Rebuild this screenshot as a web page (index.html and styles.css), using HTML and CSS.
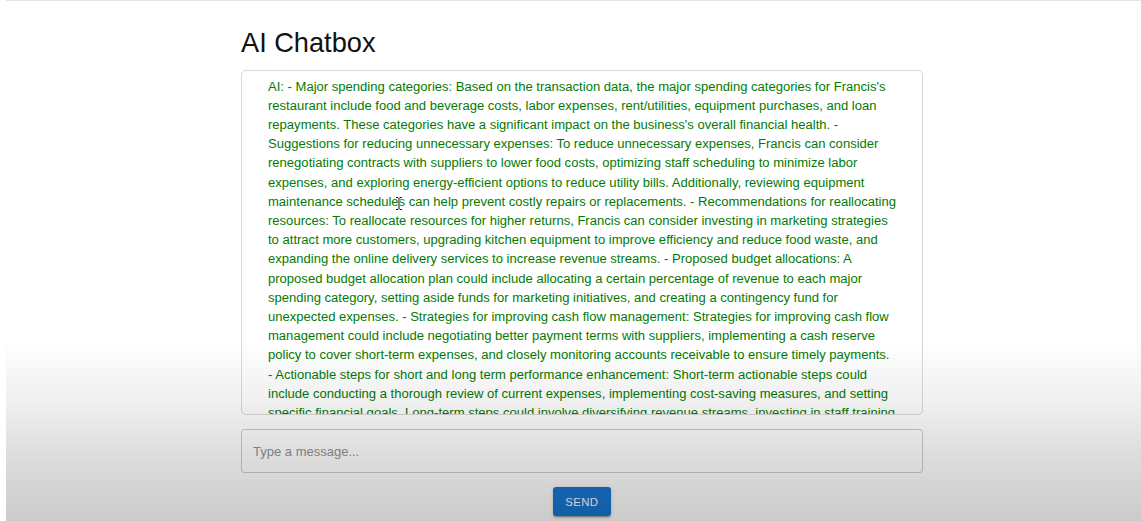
FILE: index.html
```html
<!DOCTYPE html>
<html lang="en">
<head>
<meta charset="utf-8">
<title>AI Chatbox</title>
<link rel="stylesheet" href="styles.css">
</head>
<body>
<div class="frame">
  <main class="chat">
    <h1 class="title">AI Chatbox</h1>
    <section class="messages">
      <p class="msg">AI: - Major spending categories: Based on the transaction data, the major spending categories for Francis's restaurant include food and beverage costs, labor expenses, rent/utilities, equipment purchases, and loan repayments. These categories have a significant impact on the business's overall financial health. - Suggestions for reducing unnecessary expenses: To reduce unnecessary expenses, Francis can consider renegotiating contracts with suppliers to lower food costs, optimizing staff scheduling to minimize labor expenses, and exploring energy-efficient options to reduce utility bills. Additionally, reviewing equipment maintenance schedules can help prevent costly repairs or replacements. - Recommendations for reallocating resources: To reallocate resources for higher returns, Francis can consider investing in marketing strategies to attract more customers, upgrading kitchen equipment to improve efficiency and reduce food waste, and expanding the online delivery services to increase revenue streams. - Proposed budget allocations: A proposed budget allocation plan could include allocating a certain percentage of revenue to each major spending category, setting aside funds for marketing initiatives, and creating a contingency fund for unexpected expenses. - Strategies for improving cash flow management: Strategies for improving cash flow management could include negotiating better payment terms with suppliers, implementing a cash reserve policy to cover short-term expenses, and closely monitoring accounts receivable to ensure timely payments. <span class="keep">- Actionable</span> steps for short and long term performance enhancement: Short-term actionable steps could include conducting a thorough review of current expenses, implementing cost-saving measures, and setting specific financial goals. Long-term steps could involve diversifying revenue streams, investing in staff training and development, and exploring new market opportunities to drive sustainable growth.</p>
      <svg class="ibeam" width="8" height="15" viewBox="0 0 8 15" aria-hidden="true">
        <path d="M1 1.5h2l1 1 1-1h2M4 2.5v10M1 13.5h2l1-1 1 1h2" fill="none" stroke="#fff" stroke-width="2.2"/>
        <path d="M1 1.5h2l1 1 1-1h2M4 2.5v10M1 13.5h2l1-1 1 1h2" fill="none" stroke="#111" stroke-width="1"/>
      </svg>
    </section>
    <input class="composer" type="text" placeholder="Type a message...">
    <div class="actions">
      <button class="send" type="button">Send</button>
    </div>
  </main>
</div>
</body>
</html>
```

FILE: styles.css
```css
html, body {
  margin: 0;
  padding: 0;
  background: #ffffff;
  height: 100%;
}

body {
  font-family: "Liberation Sans", Arial, Helvetica, sans-serif;
  overflow: hidden;
}

.frame {
  margin-left: 6px;
  border-top: 1px solid #e4e6e6;
  min-height: 520px;
  padding-left: 235px;
}

.frame::after {
  content: "";
  position: fixed;
  left: 6px;
  right: 0;
  top: 340px;
  bottom: 0;
  background: linear-gradient(to bottom, rgba(0,0,0,0) 0%, rgba(0,0,0,0.06) 33%, rgba(0,0,0,0.13) 62%, rgba(0,0,0,0.205) 100%);
  pointer-events: none;
  z-index: 10;
}

.chat {
  width: 681.6px;
  display: flex;
  flex-direction: column;
}

.title {
  margin: 25px 0 10px;
  font-size: 27.2px;
  line-height: 33.6px;
  font-weight: 400;
  color: #111111;
}

.messages {
  position: relative;
  box-sizing: border-box;
  height: 345.6px;
  border: 1px solid #d9d9d9;
  border-radius: 5px;
  padding: 6px 24px 12.8px 26px;
  overflow: hidden;
  background: #fff;
}

.msg {
  margin: 0;
  font-size: 13.05px;
  line-height: 19.2px;
  color: #047a04;
}

.keep {
  white-space: nowrap;
}

.ibeam {
  position: absolute;
  left: 153px;
  top: 125px;
}

.composer {
  box-sizing: border-box;
  margin-top: 14px;
  height: 44px;
  width: 100%;
  border: 1px solid #cdcdcd;
  border-radius: 3.2px;
  padding: 0 11px;
  font-family: "Liberation Sans", Arial, Helvetica, sans-serif;
  font-size: 13px;
  color: #222;
  background: #fff;
  outline: none;
}

.composer::placeholder {
  color: #939393;
}

.actions {
  display: flex;
  justify-content: center;
  margin-top: 14px;
}

.send {
  box-sizing: border-box;
  height: 29px;
  min-width: 51.2px;
  padding: 0 12.8px;
  border: 0;
  border-radius: 3.2px;
  background: #1976d2;
  color: #ffffff;
  font-family: "Liberation Sans", Arial, Helvetica, sans-serif;
  font-size: 11.4px;
  font-weight: 500;
  letter-spacing: 0.32px;
  text-transform: uppercase;
  box-shadow: 0 2.4px 0.8px -1.6px rgba(0,0,0,0.2), 0 1.6px 1.6px 0 rgba(0,0,0,0.14), 0 0.8px 4px 0 rgba(0,0,0,0.12);
}
```
